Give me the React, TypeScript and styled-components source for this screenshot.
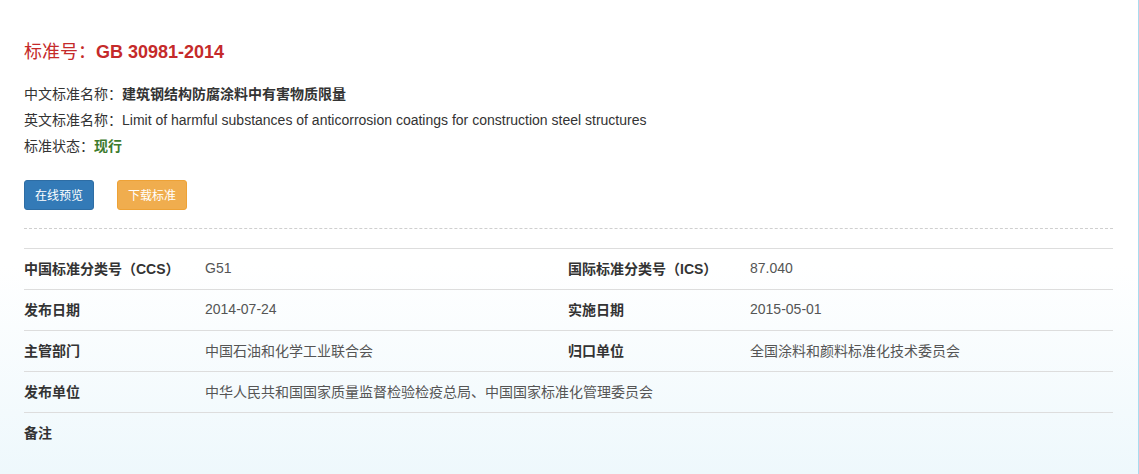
import React from "react";
import styled, { createGlobalStyle } from "styled-components";

const Global = createGlobalStyle`
  html, body { margin: 0; padding: 0; }
  body {
    font-family: "Liberation Sans", Arial, "Noto Sans CJK SC", sans-serif;
    color: #333;
    background: #fff;
  }
`;

const Page = styled.div`
  box-sizing: border-box;
  width: 1139px;
  height: 474px;
  padding: 39px 25px 0 24px;
  border-right: 1px solid #a9dbee;
  background: linear-gradient(to bottom, #ffffff 0%, #ffffff 56%, #eef8fc 100%);
  font-family: "Liberation Sans", Arial, "Noto Sans CJK SC", sans-serif;
`;

const Title = styled.h2`
  margin: 0;
  font-size: 18px;
  line-height: 26px;
  font-weight: normal;
  color: #c52a2a;
`;

const TitleCode = styled.span`
  font-weight: bold;
`;

const InfoList = styled.div`
  margin-top: 16px;
  display: flex;
  flex-direction: column;
`;

const InfoLine = styled.div`
  font-size: 14px;
  line-height: 26px;
  color: #333;
`;

const InfoValue = styled.span<{ $bold?: boolean; $color?: string }>`
  font-weight: ${(p) => (p.$bold ? "bold" : "normal")};
  color: ${(p) => p.$color || "#333"};
`;

const Buttons = styled.div`
  margin-top: 21px;
  display: flex;
  gap: 23px;
`;

const Btn = styled.button<{ $variant: "primary" | "warning" }>`
  width: 70px;
  height: 30px;
  padding: 0 0 2px;
  border-radius: 3px;
  border: 1px solid ${(p) => (p.$variant === "primary" ? "#2e6da4" : "#eea236")};
  background: ${(p) => (p.$variant === "primary" ? "#337ab7" : "#f0ad4e")};
  color: #fff;
  font-size: 12px;
  font-family: "Noto Sans CJK SC", sans-serif;
  cursor: pointer;
`;

const Dashed = styled.div`
  margin-top: 18px;
  border-top: 1px dashed #cfcfcf;
`;

const Table = styled.div`
  margin-top: 19px;
  display: grid;
  grid-template-columns: 181px 363px 182px 363px;
`;

const Cell = styled.div<{ $label?: boolean; $span?: number }>`
  box-sizing: border-box;
  height: 41px;
  padding-bottom: 2px;
  display: flex;
  align-items: center;
  border-top: 1px solid #dddddd;
  font-size: 14px;
  font-weight: ${(p) => (p.$label ? "bold" : "normal")};
  color: ${(p) => (p.$label ? "#333" : "#555")};
  grid-column: span ${(p) => p.$span || 1};
`;

type Row = [string, string, string, string];

const rows: Row[] = [
  ["中国标准分类号（CCS）", "G51", "国际标准分类号（ICS）", "87.040"],
  ["发布日期", "2014-07-24", "实施日期", "2015-05-01"],
  ["主管部门", "中国石油和化学工业联合会", "归口单位", "全国涂料和颜料标准化技术委员会"],
];

export default function App() {
  return (
    <>
      <Global />
      <Page>
        <Title>
          标准号：<TitleCode>GB 30981-2014</TitleCode>
        </Title>
        <InfoList>
          <InfoLine>
            中文标准名称：<InfoValue $bold>建筑钢结构防腐涂料中有害物质限量</InfoValue>
          </InfoLine>
          <InfoLine>
            英文标准名称：
            <InfoValue>Limit of harmful substances of anticorrosion coatings for construction steel structures</InfoValue>
          </InfoLine>
          <InfoLine>
            标准状态：<InfoValue $bold $color="#3d7b2e">现行</InfoValue>
          </InfoLine>
        </InfoList>
        <Buttons>
          <Btn $variant="primary">在线预览</Btn>
          <Btn $variant="warning">下载标准</Btn>
        </Buttons>
        <Dashed />
        <Table>
          {rows.map((r, i) => (
            <React.Fragment key={i}>
              <Cell $label>{r[0]}</Cell>
              <Cell>{r[1]}</Cell>
              <Cell $label>{r[2]}</Cell>
              <Cell>{r[3]}</Cell>
            </React.Fragment>
          ))}
          <Cell $label>发布单位</Cell>
          <Cell $span={3}>中华人民共和国国家质量监督检验检疫总局、中国国家标准化管理委员会</Cell>
          <Cell $label>备注</Cell>
          <Cell $span={3}></Cell>
        </Table>
      </Page>
    </>
  );
}
